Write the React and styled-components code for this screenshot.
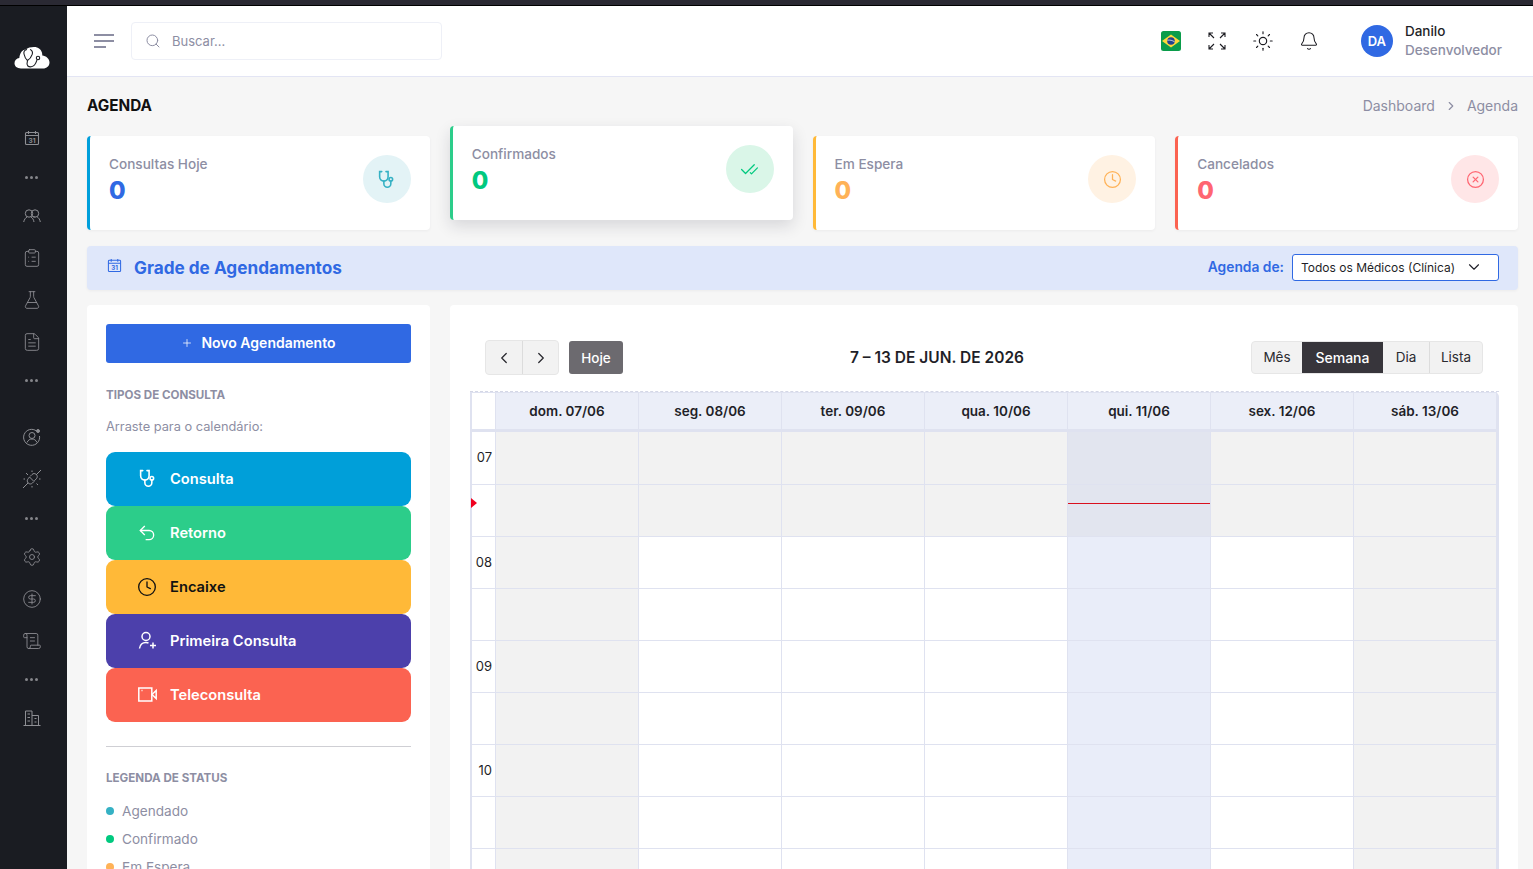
import React from "react";
import styled, { createGlobalStyle } from "styled-components";
import {
  CheckCheck, Clock, CircleX, Undo2, Plus, Search, Sun, Bell,
  ChevronLeft, ChevronRight, ChevronDown, ClipboardList, FlaskConical, FileText,
  Settings, CircleDollarSign, ScrollText,
} from "lucide-react";

const GlobalStyle = createGlobalStyle`
  html, body { margin: 0; padding: 0; height: 100%; overflow: hidden; }
  body { font-family: Inter, "Open Sans", sans-serif; background: #f6f6f6; color: #111; }
  * { box-sizing: border-box; }
`;

const Page = styled.div`
  height: 100vh;
  display: flex;
  flex-direction: column;
  overflow: hidden;
`;

const WindowStrip = styled.div`
  height: 6px;
  flex: none;
  background: #2a2933;
  border-bottom: 1px solid #000;
`;

const Shell = styled.div`
  flex: 1;
  display: flex;
  min-height: 0;
`;

const Sidebar = styled.aside`
  width: 67px;
  flex: none;
  background: #1a1c22;
  color: #8e8f94;
  display: flex;
  flex-direction: column;
  align-items: center;
  padding-right: 4px;
`;

const LogoBox = styled.div`
  height: 111.5px;
  width: 100%;
  flex: none;
  display: flex;
  justify-content: center;
  padding-top: 40px;
`;

const NavIcon = styled.div`
  height: 41.8px;
  flex: none;
  display: flex;
  align-items: center;
  justify-content: center;
  margin-top: ${(p) => p.$gap || 0}px;
`;

const NavDots = styled.div`
  height: 36px;
  flex: none;
  display: flex;
  align-items: center;
  gap: 2px;
  span {
    width: 3px;
    height: 3px;
    border-radius: 50%;
    background: #85868b;
  }
`;

const Main = styled.main`
  flex: 1;
  min-width: 0;
  display: flex;
  flex-direction: column;
  overflow: hidden;
`;

const Header = styled.header`
  height: 71px;
  flex: none;
  background: #fff;
  border-bottom: 1px solid #e3e5f4;
  display: flex;
  align-items: center;
  padding: 0 31px 1px 27px;
`;

const Burger = styled.div`
  width: 20px;
  display: flex;
  flex-direction: column;
  gap: 4px;
  margin-right: 17px;
  span {
    display: block;
    height: 2px;
    background: #8d8ea3;
  }
  span:last-child { width: 12px; }
`;

const SearchBox = styled.div`
  width: 311px;
  height: 38px;
  border: 1px solid #eef0f7;
  border-radius: 4px;
  display: flex;
  align-items: center;
  padding-left: 13px;
  gap: 11px;
  color: #8d8ea3;
  font-size: 13px;
`;

const HeaderTools = styled.div`
  margin-left: auto;
  display: flex;
  align-items: center;
`;

const ToolSlot = styled.div`
  width: 46px;
  height: 24px;
  display: flex;
  align-items: center;
  justify-content: center;
  color: #1c1c22;
`;

const Avatar = styled.div`
  width: 32px;
  height: 32px;
  border-radius: 50%;
  background: #3069e3;
  color: #fff;
  font-size: 13px;
  font-weight: 600;
  display: flex;
  align-items: center;
  justify-content: center;
  margin: 0 12px 0 29px;
`;

const UserInfo = styled.div`
  display: flex;
  flex-direction: column;
  gap: 1px;
`;

const UserName = styled.div`
  font-size: 13.5px;
  font-weight: 500;
  line-height: 18px;
  color: #1f1f28;
`;

const UserRole = styled.div`
  font-size: 13.5px;
  font-weight: 500;
  line-height: 18px;
  color: #8d8ea3;
`;

const Content = styled.div`
  flex: 1;
  min-height: 0;
  padding: 0 15px 0 20px;
  display: flex;
  flex-direction: column;
`;

const TitleRow = styled.div`
  height: 59px;
  flex: none;
  display: flex;
  align-items: center;
  justify-content: space-between;
  padding-bottom: 2px;
`;

const PageTitle = styled.h1`
  margin: 0;
  font-size: 15.3px;
  font-weight: 700;
  color: #111;
`;

const Crumbs = styled.div`
  display: flex;
  align-items: center;
  gap: 9px;
  font-size: 14px;
  color: #8d8ea3;
`;

const StatRow = styled.div`
  display: grid;
  grid-template-columns: repeat(4, 1fr);
  gap: 20px;
  height: 94px;
  flex: none;
`;

const StatCard = styled.div`
  background: #fff;
  border-radius: 4px;
  border-left: 3px solid ${(p) => p.$bar};
  padding: 19px;
  display: flex;
  justify-content: space-between;
  box-shadow: ${(p) => (p.$lifted ? "0 6px 16px rgba(30,30,50,.14)" : "0 1px 3px rgba(30,30,50,.05)")};
  transform: ${(p) => (p.$lifted ? "translateY(-10px)" : "none")};
`;

const StatLabel = styled.div`
  font-size: 13.6px;
  font-weight: 500;
  line-height: 18px;
  color: #8d8ea3;
`;

const StatValue = styled.div`
  font-size: 24px;
  font-weight: 800;
  line-height: 28px;
  margin-top: 4px;
  color: ${(p) => p.$color};
`;

const StatCircle = styled.div`
  width: 48px;
  height: 48px;
  border-radius: 50%;
  background: ${(p) => p.$bg};
  color: ${(p) => p.$color};
  display: flex;
  align-items: center;
  justify-content: center;
`;

const Banner = styled.div`
  height: 44px;
  flex: none;
  margin-top: 16px;
  background: #dfe7fa;
  border-radius: 4px;
  display: flex;
  align-items: center;
  padding: 0 19px 0 20px;
  color: #3069e3;
  box-shadow: 0 1px 3px rgba(30,30,50,.05);
`;

const BannerIcon = styled.div`
  display: flex;
  margin-bottom: 5px;
`;

const BannerTitle = styled.div`
  font-size: 17.2px;
  font-weight: 700;
  margin-left: 12px;
  padding-bottom: 1px;
`;

const BannerLabel = styled.div`
  margin-left: auto;
  font-size: 13.8px;
  font-weight: 600;
  margin-right: 8px;
  padding-bottom: 2px;
`;

const DoctorSelect = styled.div`
  width: 207px;
  height: 27px;
  margin-bottom: 1px;
  background: #fff;
  border: 1px solid #3069e3;
  border-radius: 3px;
  color: #1f1f28;
  font-size: 12px;
  display: flex;
  align-items: center;
  justify-content: space-between;
  padding: 0 15px 1px 8px;
`;

const Columns = styled.div`
  flex: 1;
  min-height: 0;
  margin-top: 15px;
  display: grid;
  grid-template-columns: 343px 1fr;
  gap: 20px;
`;

const LeftPanel = styled.section`
  background: #fff;
  border-radius: 4px 4px 0 0;
  padding: 19px;
  overflow: hidden;
`;

const NewButton = styled.div`
  height: 39px;
  background: #3069e3;
  border-radius: 3px;
  color: #fff;
  font-size: 14px;
  font-weight: 600;
  display: flex;
  align-items: center;
  justify-content: center;
  gap: 8px;
  padding-bottom: 2px;
`;

const SectionTitle = styled.div`
  font-size: 11.6px;
  font-weight: 700;
  line-height: 16px;
  color: #8d8ea3;
  margin-top: ${(p) => p.$top}px;
`;

const Hint = styled.div`
  font-size: 12.8px;
  line-height: 16px;
  color: #8d8ea3;
  margin: 16px 0 17px;
`;

const TypeItem = styled.div`
  height: 54px;
  border-radius: 9px;
  background: ${(p) => p.$bg};
  color: ${(p) => p.$fg || "#fff"};
  font-size: 14.7px;
  font-weight: 600;
  display: flex;
  align-items: center;
  padding: 0 0 1px 31px;
  gap: 13px;
`;

const TypeIcon = styled.span`
  width: 20px;
  display: flex;
  justify-content: center;
`;

const Divider = styled.hr`
  border: 0;
  height: 1px;
  background: #cfcfd4;
  margin: 24px 0 0;
`;

const LegendList = styled.div`
  display: flex;
  flex-direction: column;
  gap: 8px;
  margin-top: 15px;
`;

const LegendItem = styled.div`
  display: flex;
  align-items: center;
  gap: 8px;
  font-size: 13.6px;
  line-height: 20px;
  color: #8d8ea3;
`;

const LegendDot = styled.span`
  width: 8px;
  height: 8px;
  border-radius: 50%;
  background: ${(p) => p.$color};
`;

const RightPanel = styled.section`
  background: #fff;
  border-radius: 4px 4px 0 0;
  padding: 35px 20px 0;
  overflow: hidden;
`;

const CalToolbar = styled.div`
  height: 35px;
  display: flex;
  align-items: center;
  justify-content: space-between;
  padding: 0 15px;
  margin-bottom: 17px;
`;

const ToolGroup = styled.div`
  display: flex;
  align-items: center;
`;

const ArrowGroup = styled.div`
  display: flex;
  height: 35px;
  background: #f2f2f2;
  border: 1px solid #e6e6e6;
  border-radius: 4px;
  color: #2a2a30;
  margin-right: 10px;
`;

const ArrowBtn = styled.div`
  width: 36px;
  display: flex;
  align-items: center;
  justify-content: center;
  & + & { border-left: 1px solid #dcdcdc; }
`;

const TodayBtn = styled.div`
  width: 54px;
  height: 33px;
  background: #6c6a6f;
  border-radius: 3px;
  color: #fff;
  font-size: 13.5px;
  font-weight: 500;
  display: flex;
  align-items: center;
  justify-content: center;
`;

const CalTitle = styled.div`
  font-size: 15.5px;
  font-weight: 600;
  color: #1f1f28;
  padding-bottom: 1px;
`;

const ViewGroup = styled.div`
  display: flex;
  height: 33px;
  background: #f2f2f2;
  border: 1px solid #e6e6e6;
  border-radius: 4px;
`;

const ViewBtn = styled.div`
  width: ${(p) => p.$w}px;
  display: flex;
  align-items: center;
  justify-content: center;
  font-size: ${(p) => (p.$active ? 14 : 13.5)}px;
  padding-bottom: 1px;
  font-weight: ${(p) => (p.$active ? 500 : 400)};
  background: ${(p) => (p.$active ? "#37353b" : "transparent")};
  color: ${(p) => (p.$active ? "#fff" : "#2a2a30")};
  border-left: ${(p) => (p.$line ? "1px solid #dcdcdc" : "0")};
`;

const CalGrid = styled.div`
  position: relative;
  display: grid;
  grid-template-columns: 24px repeat(7, 143px);
  grid-template-rows: 40px 53px;
  grid-auto-rows: 52px;
  width: 1029px;
  border: 2px solid #dfe2f0;
  border-top: 0;
  border-bottom: 0;
  border-top-right-radius: 5px;
  &::before {
    content: "";
    position: absolute;
    left: -2px;
    right: -2px;
    top: -1px;
    border-top: 1px dashed #d4d7e6;
  }
`;

const HeadCorner = styled.div`
  border-top: 1px solid #dfe2f0;
  border-right: 1px solid #dfe2f0;
  border-bottom: 3px solid #dfe2f0;
`;

const HeadCell = styled.div`
  background: #ebeef8;
  border-top: 1px solid #dfe2f0;
  border-right: 1px solid #dfe2f0;
  border-bottom: 3px solid #dfe2f0;
  display: flex;
  align-items: center;
  justify-content: center;
  font-size: 13.5px;
  font-weight: 600;
  color: #1f1f28;
`;

const AxisCell = styled.div`
  position: relative;
  border-right: 1px solid #dfe2f0;
  border-bottom: 1px solid #dfe2f0;
  font-size: 13px;
  line-height: 50px;
  text-align: right;
  padding-right: 3px;
  color: #1f1f28;
`;

const SlotCell = styled.div`
  position: relative;
  border-right: 1px solid #dfe2f0;
  border-bottom: 1px solid #dfe2f0;
  background: ${(p) => p.$bg};
`;

const NowLine = styled.div`
  position: absolute;
  left: 0;
  right: 0;
  top: 18px;
  height: 1px;
  background: #d9101e;
`;

const NowArrow = styled.div`
  position: absolute;
  left: -1px;
  top: 13px;
  border-left: 6px solid #f00020;
  border-top: 5px solid transparent;
  border-bottom: 5px solid transparent;
`;

const Calendar31 = ({ size = 16, color = "currentColor" }) => (
  <svg width={size} height={size} viewBox="0 0 16 16" fill="none" stroke={color} strokeWidth="1.100">
    <rect x="1.500" y="2.500" width="13" height="12" rx="1" />
    <path d="M1.500 5.500h13M4.500 1v3M11.500 1v3" />
    <text x="8" y="12.600" fontSize="6.500" fontWeight="700" textAnchor="middle" fill={color} stroke="none" fontFamily="Inter, sans-serif">31</text>
  </svg>
);

const CloudLogo = () => (
  <svg width="36" height="24" viewBox="0 0 36 24">
    <path d="M7 22.500C3 22.500.5 20.200.5 17.300c0-2.700 2-4.800 4.800-5.200C6 6.300 9 3.500 11.500 3.500 14.500 1.200 20 .5 23 1.500c3.500 1.200 5.500 4.300 5.300 8 3.700.3 7.200 3.200 7.200 7 0 3.600-2.800 6-6.500 6z" fill="#fff" />
    <path d="M13 3.500c-2.500.3-3.500 2.300-3 4.500.5 2.500 1.800 5 3.500 6.500 2-1.200 4-3.800 4.800-6.300.6-2.200-.3-4.200-2.300-4.700M13.500 14.500c-.6 2-.7 4 .3 5.500 1.800 1.500 5 1 6.700-1 1.400-1.600 2-3.500 2.500-5" fill="none" stroke="#1a1c22" strokeWidth="1.100" />
    <circle cx="24" cy="12" r="1.700" fill="none" stroke="#1a1c22" strokeWidth="1.100" />
  </svg>
);

const TwoUsers = () => (
  <svg width="18" height="18" viewBox="0 0 18 18" fill="none" stroke="currentColor" strokeWidth="1">
    <circle cx="6" cy="6.500" r="3.700" />
    <circle cx="12" cy="6.500" r="3.700" />
    <path d="M.7 15c.5-2.500 2-4.500 3.300-5M7.800 10c1.700.8 2.800 2.500 3.200 5M10.200 10c1-.1 1.500-.1 2-.1M14.200 10c1.500.7 2.700 2.500 3.100 5" />
  </svg>
);

const UserGear = () => (
  <svg width="18" height="18" viewBox="0 0 18 18" fill="none" stroke="currentColor" strokeWidth="1">
    <path d="M13.500 3A8 8 0 1 0 16.500 8" />
    <circle cx="9" cy="7.500" r="3" />
    <path d="M4 14.500c1-2.500 3-3.500 5-3.500s4 1 5 3.500" />
    <circle cx="15" cy="3" r="1.500" fill="currentColor" />
  </svg>
);

const PlugOff = () => (
  <svg width="20" height="20" viewBox="0 0 20 20" fill="none" stroke="currentColor" strokeWidth="1">
    <path d="M1 19l5-5M14 6l5-5" />
    <path d="M7.500 8 12 12.500l-1.500 1.500c-1.300 1.300-3 1.300-4.300 0s-1.300-3 0-4.300zM8 7.500l2-2c1.300-1.300 3-1.300 4.300 0s1.300 3 0 4.300l-2 2" />
    <path d="M4 4l2 2M10 1.500V3M1.500 10H3M17 10h1.500M10 17v1.500M14.500 14.500l1.500 1.500" />
  </svg>
);

const Buildings = () => (
  <svg width="18" height="18" viewBox="0 0 18 18" fill="none" stroke="currentColor" strokeWidth="1">
    <path d="M2.500 16.500V2h6.500v14.500M9 6.500h6.500v10M.5 16.500h17" />
    <path d="M4.500 5H7M4.500 8.500H7M4.500 12H7M11.500 9.500H13.500M11.500 13H13.500" />
  </svg>
);

const Expand = () => (
  <svg width="18" height="18" viewBox="0 0 18 18" fill="none" stroke="currentColor" strokeWidth="1.100">
    <path d="M1 5V1h4M1 1l5 5M13 1h4v4M17 1l-5 5M1 13v4h4M1 17l5-5M17 13v4h-4M17 17l-5-5" />
  </svg>
);

const BrazilFlag = () => (
  <svg width="20" height="20" viewBox="0 0 20 20">
    <rect width="20" height="20" rx="2.500" fill="#0a9c4a" />
    <path d="M10 3.500 19 10l-9 6.500L1 10z" fill="#ffd83a" />
    <circle cx="10" cy="10" r="3.800" fill="#24408e" />
    <path d="M6.400 9.200c2.500-.4 5 .2 7.200 1.600" fill="none" stroke="#e8eef0" strokeWidth=".8" />
  </svg>
);

const Scope = ({ size = 18, width = 1.5 }) => (
  <svg width={size} height={size} viewBox="0 0 18 18" fill="none" stroke="currentColor" strokeWidth={width} strokeLinecap="round">
    <path d="M4.500 1.500H2.500V6.500a4 4 0 0 0 8 0V1.500H8.500" />
    <path d="M6.500 10.500v2.500a3.300 3.300 0 0 0 6.600 0v-2.500" />
    <circle cx="13.100" cy="8.800" r="1.700" />
  </svg>
);

const NewPatient = ({ size = 19 }) => (
  <svg width={size} height={size} viewBox="0 0 19 19" fill="none" stroke="currentColor" strokeWidth="1.500">
    <circle cx="8" cy="5.500" r="4" />
    <path d="M1.500 17.500c.5-3.500 3-6 6.500-6 1 0 1.800.2 2.500.5M15 11.500v6M12 14.500h6" />
  </svg>
);

const Camera = ({ size = 19 }) => (
  <svg width={size} height={size} viewBox="0 0 19 19" fill="none" stroke="currentColor" strokeWidth="1.500">
    <rect x=".8" y="3" width="13" height="13" />
    <path d="M14 9.500l4.200-4v8z" />
    <path d="M3.500 5.500h1" />
  </svg>
);

const stats = [
  { label: "Consultas Hoje", bar: "#009fdb", color: "#3069e3", bg: "#e3f3f6", ic: "#35b1c4", Icon: Scope },
  { label: "Confirmados", bar: "#2ccd8a", color: "#00c97f", bg: "#daf6e8", ic: "#00c97f", Icon: CheckCheck },
  { label: "Em Espera", bar: "#ffb938", color: "#ffb257", bg: "#fff2e3", ic: "#ffb257", Icon: Clock },
  { label: "Cancelados", bar: "#fb6351", color: "#ff6672", bg: "#ffe6e7", ic: "#ff6672", Icon: CircleX },
];

const types = [
  { label: "Consulta", bg: "#009fd9", Icon: Scope, size: 19 },
  { label: "Retorno", bg: "#2ccd8a", Icon: Undo2, size: 20 },
  { label: "Encaixe", bg: "#ffb938", fg: "#111", Icon: Clock, size: 20 },
  { label: "Primeira Consulta", bg: "#4c40ab", Icon: NewPatient, size: 19 },
  { label: "Teleconsulta", bg: "#fb6351", Icon: Camera, size: 19 },
];

const legend = [
  { label: "Agendado", color: "#35b1c4" },
  { label: "Confirmado", color: "#00c97f" },
  { label: "Em Espera", color: "#ffb257" },
];

const days = ["dom. 07/06", "seg. 08/06", "ter. 09/06", "qua. 10/06", "qui. 11/06", "sex. 12/06", "sáb. 13/06"];

const rows = ["07", "", "08", "", "09", "", "10", "", "", ""];

const slotColor = (row, col) => {
  if (col === 4) return row < 2 ? "#e2e5ef" : "#e9edf9";
  if (row < 2 || col === 0 || col === 6) return "#f2f2f2";
  return "#fff";
};

const Dots = () => (
  <NavDots>
    <span />
    <span />
    <span />
  </NavDots>
);

export default function App() {
  const nav = { size: 20, strokeWidth: 1.05 };
  return (
    <Page>
      <GlobalStyle />
      <WindowStrip />
      <Shell>
        <Sidebar>
          <LogoBox>
            <CloudLogo />
          </LogoBox>
          <NavIcon><Calendar31 /></NavIcon>
          <Dots />
          <NavIcon><TwoUsers /></NavIcon>
          <NavIcon><ClipboardList {...nav} /></NavIcon>
          <NavIcon><FlaskConical {...nav} /></NavIcon>
          <NavIcon><FileText {...nav} /></NavIcon>
          <Dots />
          <NavIcon $gap={18}><UserGear /></NavIcon>
          <NavIcon><PlugOff /></NavIcon>
          <Dots />
          <NavIcon><Settings {...nav} /></NavIcon>
          <NavIcon><CircleDollarSign {...nav} /></NavIcon>
          <NavIcon><ScrollText {...nav} /></NavIcon>
          <Dots />
          <NavIcon><Buildings /></NavIcon>
        </Sidebar>
        <Main>
          <Header>
            <Burger>
              <span />
              <span />
              <span />
            </Burger>
            <SearchBox>
              <Search size={16} strokeWidth={1.5} />
              Buscar...
            </SearchBox>
            <HeaderTools>
              <ToolSlot><BrazilFlag /></ToolSlot>
              <ToolSlot><Expand /></ToolSlot>
              <ToolSlot><Sun size={22} strokeWidth={1.25} /></ToolSlot>
              <ToolSlot><Bell size={20} strokeWidth={1.25} /></ToolSlot>
              <Avatar>DA</Avatar>
              <UserInfo>
                <UserName>Danilo</UserName>
                <UserRole>Desenvolvedor</UserRole>
              </UserInfo>
            </HeaderTools>
          </Header>
          <Content>
            <TitleRow>
              <PageTitle>AGENDA</PageTitle>
              <Crumbs>
                Dashboard
                <ChevronRight size={14} />
                Agenda
              </Crumbs>
            </TitleRow>
            <StatRow>
              {stats.map((s, i) => (
                <StatCard key={s.label} $bar={s.bar} $lifted={i === 1}>
                  <div>
                    <StatLabel>{s.label}</StatLabel>
                    <StatValue $color={s.color}>0</StatValue>
                  </div>
                  <StatCircle $bg={s.bg} $color={s.ic}>
                    <s.Icon size={19} strokeWidth={1.6} />
                  </StatCircle>
                </StatCard>
              ))}
            </StatRow>
            <Banner>
              <BannerIcon><Calendar31 size={15} /></BannerIcon>
              <BannerTitle>Grade de Agendamentos</BannerTitle>
              <BannerLabel>Agenda de:</BannerLabel>
              <DoctorSelect>
                Todos os Médicos (Clínica)
                <ChevronDown size={18} strokeWidth={1.5} />
              </DoctorSelect>
            </Banner>
            <Columns>
              <LeftPanel>
                <NewButton>
                  <Plus size={12} strokeWidth={1.5} />
                  Novo Agendamento
                </NewButton>
                <SectionTitle $top={24}>TIPOS DE CONSULTA</SectionTitle>
                <Hint>Arraste para o calendário:</Hint>
                {types.map((t) => (
                  <TypeItem key={t.label} $bg={t.bg} $fg={t.fg}>
                    <TypeIcon><t.Icon size={t.size} strokeWidth={1.6} /></TypeIcon>
                    {t.label}
                  </TypeItem>
                ))}
                <Divider />
                <SectionTitle $top={23}>LEGENDA DE STATUS</SectionTitle>
                <LegendList>
                  {legend.map((l) => (
                    <LegendItem key={l.label}>
                      <LegendDot $color={l.color} />
                      {l.label}
                    </LegendItem>
                  ))}
                </LegendList>
              </LeftPanel>
              <RightPanel>
                <CalToolbar>
                  <ToolGroup>
                    <ArrowGroup>
                      <ArrowBtn><ChevronLeft size={18} strokeWidth={1.75} /></ArrowBtn>
                      <ArrowBtn><ChevronRight size={18} strokeWidth={1.75} /></ArrowBtn>
                    </ArrowGroup>
                    <TodayBtn>Hoje</TodayBtn>
                  </ToolGroup>
                  <CalTitle>7 – 13 DE JUN. DE 2026</CalTitle>
                  <ViewGroup>
                    <ViewBtn $w={50}>Mês</ViewBtn>
                    <ViewBtn $w={81} $active>Semana</ViewBtn>
                    <ViewBtn $w={46}>Dia</ViewBtn>
                    <ViewBtn $w={53} $line>Lista</ViewBtn>
                  </ViewGroup>
                </CalToolbar>
                <CalGrid>
                  <HeadCorner />
                  {days.map((d) => (
                    <HeadCell key={d}>{d}</HeadCell>
                  ))}
                  {rows.map((hour, r) => (
                    <React.Fragment key={r}>
                      <AxisCell>
                        {hour}
                        {r === 1 && <NowArrow />}
                      </AxisCell>
                      {days.map((d, c) => (
                        <SlotCell key={d} $bg={slotColor(r, c)}>
                          {r === 1 && c === 4 && <NowLine />}
                        </SlotCell>
                      ))}
                    </React.Fragment>
                  ))}
                </CalGrid>
              </RightPanel>
            </Columns>
          </Content>
        </Main>
      </Shell>
    </Page>
  );
}
